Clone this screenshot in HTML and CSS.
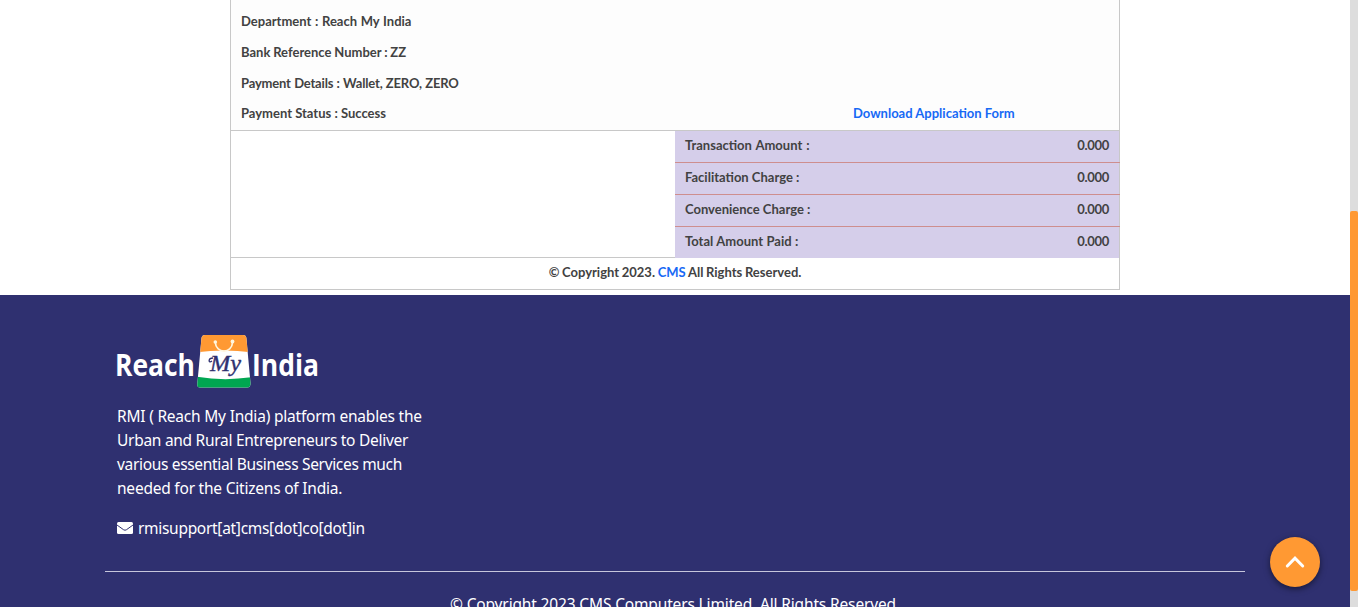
FILE: index.html
```
<!DOCTYPE html>
<html lang="en">
<head>
<meta charset="utf-8">
<title>Reach My India</title>
<link rel="stylesheet" href="styles.css">
</head>
<body>
<div class="page">
  <main class="receipt">
    <section class="details">
      <p class="row"><span class="t1">Department : Reach My India</span></p>
      <p class="row"><span class="t2">Bank Reference Number : ZZ</span></p>
      <p class="row"><span class="t3">Payment Details : Wallet, ZERO, ZERO</span></p>
      <p class="row last"><span class="t4">Payment Status : Success</span><a class="download" href="#">Download Application Form</a></p>
    </section>
    <section class="totals">
      <div class="blank"></div>
      <dl class="charges">
        <div class="charge"><dt class="c1">Transaction Amount :</dt><dd>0.000</dd></div>
        <div class="charge"><dt class="c2">Facilitation Charge :</dt><dd>0.000</dd></div>
        <div class="charge"><dt class="c3">Convenience Charge :</dt><dd>0.000</dd></div>
        <div class="charge"><dt class="c4">Total Amount Paid :</dt><dd>0.000</dd></div>
      </dl>
    </section>
    <p class="rights"><span>© Copyright 2023. <a href="#">CMS</a> All Rights Reserved.</span></p>
  </main>
  <footer class="footer">
    <div class="about">
      <svg class="logo" width="204" height="56" viewBox="0 0 204 56">
        <text class="word" x="-2" y="42" textLength="80" lengthAdjust="spacingAndGlyphs">Reach</text>
        <clipPath id="bag"><path d="M88 1H126Q129 1 129.400 4L133.500 49Q133.700 53.500 130 53.500H83Q80 53.500 80.300 50L84.500 4Q85 1 88 1Z"/></clipPath>
        <g clip-path="url(#bag)">
          <path fill="#fff" d="M78 0H136V56H78Z"/>
          <path fill="#ff9933" d="M78 0H136V18.500Q107 14.500 78 18.500Z"/>
          <path fill="#00a651" d="M78 42.500Q107 47.500 136 43V56H78Z"/>
        </g>
        <path d="M98.300 8.500C99 20 115 20 115.500 8.500" fill="none" stroke="#fff6df" stroke-width="1.700"/>
        <circle cx="98.300" cy="8" r="1.800" fill="#fff6df"/><circle cx="115.500" cy="7.500" r="1.900" fill="#fff6df"/>
        <path d="M95 27C91 30 91 24 96 24" fill="none" stroke="#2f3070" stroke-width="1.300"/>
        <text class="script" x="93" y="37" textLength="31" lengthAdjust="spacingAndGlyphs">My</text>
        <text class="word" x="135" y="42" textLength="67" lengthAdjust="spacingAndGlyphs">India</text>
      </svg>
      <p class="blurb"><span class="b1">RMI ( Reach My India) platform enables the</span><br><span class="b2">Urban and Rural Entrepreneurs to Deliver</span><br><span class="b3">various essential Business Services much</span><br><span class="b4">needed for the Citizens of India.</span></p>
      <p class="mail"><svg width="16" height="16" viewBox="0 0 16 16"><rect y="2" width="16" height="12" rx="1.500" fill="#fff"/><path d="M0 5L6.500 9.700Q8 10.800 9.500 9.700L16 5" fill="none" stroke="#2f3070" stroke-width="1"/></svg><span class="m1">rmisupport[at]cms[dot]co[dot]in</span></p>
    </div>
    <p class="copy"><span>© Copyright 2023 CMS Computers Limited. All Rights Reserved.</span></p>
  </footer>
</div>
<a class="to-top" href="#" aria-label="Back to top"><svg width="20" height="14" viewBox="0 0 20 14"><path d="M2.300 11L10 3.200L17.700 11" fill="none" stroke="#fff" stroke-width="3" stroke-linecap="round"/></svg></a>
<div class="scrollbar"><div class="thumb"></div></div>
</body>
</html>
```
FILE: styles.css
```
* { box-sizing: border-box; }
body { margin: 0; height: 607px; overflow: hidden; display: flex; background: #fff; }
p, dl, dd { margin: 0; }
a { color: #0d6efd; text-decoration: none; }
.page { flex: 1; height: 607px; overflow: hidden; }
.receipt {
  width: 890px; height: 290px; margin-left: 230px;
  border: 1px solid #c8c8c8; border-top: 0;
  font: 700 13px/20px Lato, sans-serif; color: #424242;
}
.details { height: 131px; padding: 11px 10px 0; background: #fdfdfd; border-bottom: 1px solid #c8c8c8; }
.row { display: flex; height: 31px; white-space: nowrap; }
.row.last { position: relative; top: -1px; }
.download { margin-left: auto; width: 256px; }
.download, .rights a { color: #1769f5; }
.t1 { word-spacing: .5px; }
.t2 { word-spacing: -.3px; }
.t3 { letter-spacing: -.18px; word-spacing: .4px; }
.c1 { word-spacing: .8px; }
.c4 { word-spacing: .3px; }
.totals { display: flex; height: 127px; }
.blank { width: 444px; border-bottom: 1px solid #c8c8c8; }
.charges { flex: 1; background: #d5ceea; }
.charge { display: flex; justify-content: space-between; height: 32px; margin-right: -1px; padding: 4px 11px 0 10px; border-bottom: 1px solid #ce8e8e; white-space: nowrap; }
.charge dd { letter-spacing: -.3px; }
.charge:last-child { border-bottom: 0; height: 31px; }
.rights { height: 31px; padding-top: 4px; text-align: center; word-spacing: -.5px; }
.footer { height: 312px; margin-top: 5px; background: #2f3070; color: #fff; font: 400 15.5px/24px "Noto Sans", sans-serif; white-space: nowrap; overflow: hidden; }
.about { width: 1140px; height: 277px; margin-left: 105px; padding: 39px 12px 0; border-bottom: 1px solid #c6c6dc; }
.logo { display: block; overflow: visible; }
.word { font: 700 31px "Open Sans", sans-serif; fill: #fff; }
.script { font: italic 400 23px "Liberation Serif", serif; fill: #2f3070; stroke: #2f3070; stroke-width: .4px; }
.blurb { margin-top: 14px; }
.b1 { letter-spacing: -.21px; }
.b2 { letter-spacing: -.28px; }
.b3 { letter-spacing: -.33px; }
.b4 { letter-spacing: -.22px; }
.m1 { letter-spacing: -.3px; }
.mail { display: flex; align-items: center; gap: 5px; margin-top: 16px; }
.copy { margin-top: 20px; text-align: center; letter-spacing: -.15px; }
.to-top { position: absolute; left: 1270px; top: 537px; width: 50px; height: 50px; border-radius: 50%; background: #ff9933; box-shadow: 0 2px 6px rgba(0,0,0,.5); display: flex; align-items: center; justify-content: center; }
.scrollbar { width: 8px; height: 607px; background: #ddd; padding-top: 211px; }
.thumb { height: 380px; background: #ff9933; border-radius: 2px; }
```
